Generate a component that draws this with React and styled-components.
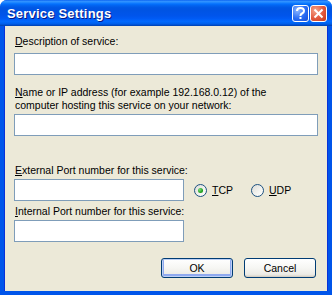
import React from 'react';
import styled, { createGlobalStyle } from 'styled-components';

const GlobalStyle = createGlobalStyle`
  html, body { margin: 0; padding: 0; background: #ffffff; }
  body { font-family: 'Liberation Sans', Arial, sans-serif; }
`;

const Window = styled.div`
  width: 332px;
  height: 295px;
  display: flex;
  flex-direction: column;
  box-sizing: border-box;
  background: #0055ea;
  border-radius: 7px 7px 0 0;
  overflow: hidden;
`;

const TitleBar = styled.div`
  height: 26px;
  flex: none;
  display: flex;
  align-items: center;
  padding: 0 5px 0 7px;
  background: linear-gradient(to bottom,
    #0058ee 0%, #3593ff 4%, #288eff 8%, #127dff 12%, #036ffc 16%,
    #0262ee 22%, #0057e5 30%, #0054e3 40%, #0055eb 60%, #005bf5 72%,
    #026afe 82%, #0062ef 90%, #0052d6 95%, #0040ab 100%);
`;

const Title = styled.div`
  flex: 1;
  color: #ffffff;
  font-family: 'Liberation Sans', Arial, sans-serif;
  font-weight: bold;
  font-size: 13px;
  letter-spacing: 0.2px;
  text-shadow: 1px 1px 0 #0a1883;
  padding-top: 1px;
`;

const CaptionButton = styled.div`
  width: 17px;
  height: 17px;
  margin-left: 1px;
  box-sizing: border-box;
  border: 1px solid #ffffff;
  border-radius: 3px;
  display: flex;
  align-items: center;
  justify-content: center;
  background: ${p => p.$close
    ? 'radial-gradient(circle at 30% 30%, #f4a48a 0%, #e2583d 55%, #c3391b 100%)'
    : 'radial-gradient(circle at 30% 30%, #8cb6ff 0%, #2a6cf4 55%, #1a4fd6 100%)'};
`;

const Frame = styled.div`
  flex: 1;
  display: flex;
  flex-direction: column;
  margin: 0 4px 4px 4px;
  border-left: 1px solid #0831d9;
  border-right: 1px solid #0831d9;
  background: #ece9d8;
  padding: 9px 9px 0 9px;
  font-size: 10.5px;
`;

const Label = styled.div`
  font-size: 10.5px;
  line-height: 13px;
  color: #000000;
  margin-top: ${p => p.$top || 0}px;
  padding-left: 1px;
`;

const Key = styled.span`
  text-decoration: underline;
  text-underline-offset: 1px;
`;

const TextBox = styled.input`
  display: block;
  box-sizing: border-box;
  width: ${p => p.$width ? `${p.$width}px` : '304px'};
  height: 22px;
  margin: ${p => p.$top || 0}px 0 0 0;
  border: 1px solid #7f9db9;
  background: #ffffff;
  padding: 0 3px;
  font-family: 'Liberation Sans', Arial, sans-serif;
  font-size: 11px;
  outline: none;
`;

const PortRow = styled.div`
  display: flex;
  align-items: center;
  margin-top: 2px;
`;

const Radio = styled.label`
  display: flex;
  align-items: center;
  font-size: 10.5px;
  color: #000000;
  margin-left: ${p => p.$left}px;
`;

const RadioCircle = styled.span`
  width: 13px;
  height: 13px;
  box-sizing: border-box;
  border-radius: 50%;
  border: 1px solid #1c5180;
  background: linear-gradient(135deg, #dcdcd7 0%, #f4f4f0 60%, #ffffff 100%);
  display: flex;
  align-items: center;
  justify-content: center;
  margin-right: 5px;

  &::after {
    content: '';
    display: ${p => p.$checked ? 'block' : 'none'};
    width: 5px;
    height: 5px;
    border-radius: 50%;
    background: radial-gradient(circle at 35% 35%, #7be07b 0%, #21a121 60%, #138013 100%);
  }
`;

const ButtonRow = styled.div`
  display: flex;
  justify-content: flex-end;
  gap: 11px;
  margin-top: 16px;
  padding-right: 2px;
`;

const Button = styled.button`
  width: 72px;
  height: 20px;
  box-sizing: border-box;
  border: 1px solid #003c74;
  border-radius: 3px;
  background: linear-gradient(to bottom, #ffffff 0%, #f6f6f3 50%, #ecebe6 85%, #d6d0c5 100%);
  box-shadow: ${p => p.$default
    ? 'inset 0 0 0 1px #bdd0f5, inset 0 -1px 0 2px #8fa9ef'
    : 'inset 0 -1px 0 #d6d0c5'};
  font-family: 'Liberation Sans', Arial, sans-serif;
  font-size: 10.5px;
  color: #000000;
  padding: 0;
`;

const HelpGlyph = () => (
  <svg width="11" height="13" viewBox="0 0 11 13">
    <path d="M2 4 Q2 1 5.5 1 Q9 1 9 4 Q9 5.5 7 6.5 Q5.5 7.3 5.5 8.5 V9"
      fill="none" stroke="#ffffff" strokeWidth="2" />
    <rect x="4.5" y="10" width="2" height="2" fill="#ffffff" />
  </svg>
);

const CloseGlyph = () => (
  <svg width="11" height="11" viewBox="0 0 11 11">
    <path d="M1.5 1.5 L9.5 9.5 M9.5 1.5 L1.5 9.5" stroke="#ffffff" strokeWidth="2" />
  </svg>
);

const App = () => {
  return (
    <Window>
      <GlobalStyle />
      <TitleBar>
        <Title>Service Settings</Title>
        <CaptionButton><HelpGlyph /></CaptionButton>
        <CaptionButton $close><CloseGlyph /></CaptionButton>
      </TitleBar>
      <Frame>
        <Label><Key>D</Key>escription of service:</Label>
        <TextBox $top={5} />

        <Label $top={11}>
          <Key>N</Key>ame or IP address (for example 192.168.0.12) of the<br />
          computer hosting this service on your network:
        </Label>
        <TextBox $top={2} />

        <Label $top={28}><Key>E</Key>xternal Port number for this service:</Label>
        <PortRow>
          <TextBox $width={170} />
          <Radio $left={10}><RadioCircle $checked /><Key>T</Key>CP</Radio>
          <Radio $left={18}><RadioCircle /><Key>U</Key>DP</Radio>
        </PortRow>

        <Label $top={4}><Key>I</Key>nternal Port number for this service:</Label>
        <TextBox $width={170} $top={2} />

        <ButtonRow>
          <Button $default>OK</Button>
          <Button>Cancel</Button>
        </ButtonRow>
      </Frame>
    </Window>
  );
};

export default App;
